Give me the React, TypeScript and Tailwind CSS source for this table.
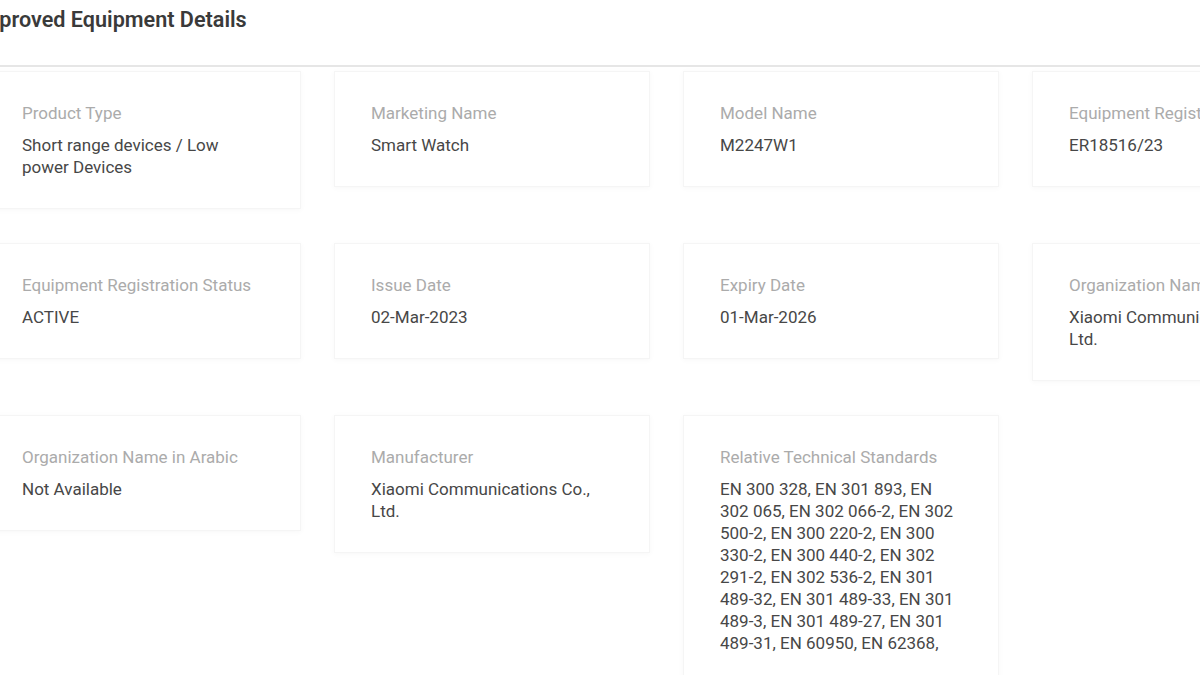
type Detail = {
  label: string;
  value: string;
};

const details: Detail[] = [
  { label: "Product Type", value: "Short range devices / Low power Devices" },
  { label: "Marketing Name", value: "Smart Watch" },
  { label: "Model Name", value: "M2247W1" },
  { label: "Equipment Registration Number", value: "ER18516/23" },
  { label: "Equipment Registration Status", value: "ACTIVE" },
  { label: "Issue Date", value: "02-Mar-2023" },
  { label: "Expiry Date", value: "01-Mar-2026" },
  { label: "Organization Name", value: "Xiaomi Communications Co., Ltd." },
  { label: "Organization Name in Arabic", value: "Not Available" },
  { label: "Manufacturer", value: "Xiaomi Communications Co., Ltd." },
  {
    label: "Relative Technical Standards",
    value:
      "EN 300 328, EN 301 893, EN 302 065, EN 302 066-2, EN 302 500-2, EN 300 220-2, EN 300 330-2, EN 300 440-2, EN 302 291-2, EN 302 536-2, EN 301 489-32, EN 301 489-33, EN 301 489-3, EN 301 489-27, EN 301 489-31, EN 60950, EN 62368,",
  },
];

function DetailCard({ label, value }: Detail) {
  return (
    <div className="bg-white border border-[#f5f5f5] shadow-[0_1px_6px_rgba(0,0,0,0.035)] pt-[31px] pb-[30px] pl-[36px] pr-[36px]">
      <p className="text-[17px] leading-[20px] text-[#ababab] whitespace-nowrap">
        {label}
      </p>
      <p className="mt-[11px] text-[17px] leading-[22px] text-[#474747]">
        {value}
      </p>
    </div>
  );
}

export default function App() {
  return (
    <div className="w-[1200px] h-[675px] overflow-hidden bg-white font-['Roboto','Liberation_Sans',sans-serif]">
      <div className="h-[67px] border-b-2 border-[#e6e6e6]">
        <h1 className="-ml-[27px] pt-[7px] text-[21.6px] leading-[26px] font-semibold text-[#3a3a3a] whitespace-nowrap">
          Approved Equipment Details
        </h1>
      </div>

      <div className="-ml-[15px] mt-[4px] grid grid-cols-[repeat(4,316px)] gap-x-[33px] gap-y-[34px] items-start">
        {details.map((item) => (
          <DetailCard key={item.label} label={item.label} value={item.value} />
        ))}
      </div>
    </div>
  );
}
